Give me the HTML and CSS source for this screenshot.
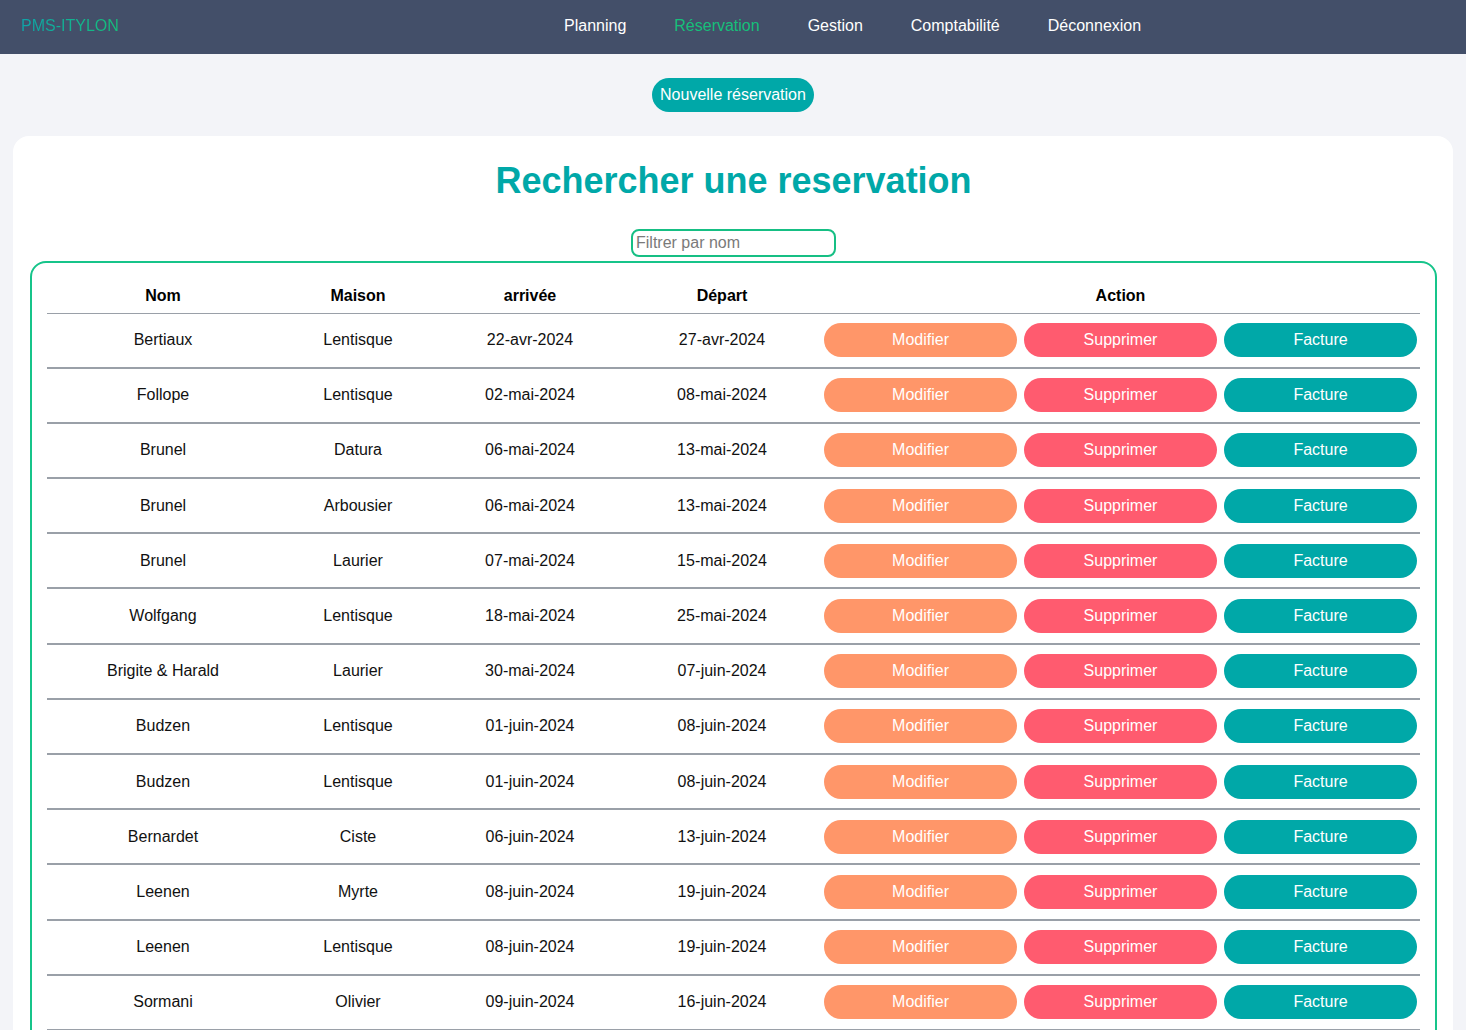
FILE: index.html
```html
<!DOCTYPE html>
<html lang="fr">
<head>
<meta charset="utf-8">
<title>PMS-ITYLON</title>
<link rel="stylesheet" href="styles.css">
</head>
<body>
<nav class="topbar">
  <div class="logo">PMS-ITYLON</div>
  <ul class="menu">
    <li><a href="#">Planning</a></li>
    <li><a href="#" class="active">Réservation</a></li>
    <li><a href="#">Gestion</a></li>
    <li><a href="#">Comptabilité</a></li>
    <li><a href="#">Déconnexion</a></li>
  </ul>
</nav>
<main class="page">
  <div class="new-wrap"><button class="btn-new">Nouvelle réservation</button></div>
  <section class="card">
    <h1 class="title">Rechercher une reservation</h1>
    <div class="filter-wrap"><input class="filter" type="text" placeholder="Filtrer par nom"></div>
    <div class="table-box">
      <table class="resa">
        <colgroup>
          <col class="c-nom"><col class="c-maison"><col class="c-arr"><col class="c-dep"><col class="c-act">
        </colgroup>
        <thead>
          <tr><th>Nom</th><th>Maison</th><th>arrivée</th><th>Départ</th><th>Action</th></tr>
        </thead>
        <tbody>
          <tr><td>Bertiaux</td><td>Lentisque</td><td>22-avr-2024</td><td>27-avr-2024</td><td><div class="actions"><button class="b mod">Modifier</button><button class="b sup">Supprimer</button><button class="b fac">Facture</button></div></td></tr>
          <tr><td>Follope</td><td>Lentisque</td><td>02-mai-2024</td><td>08-mai-2024</td><td><div class="actions"><button class="b mod">Modifier</button><button class="b sup">Supprimer</button><button class="b fac">Facture</button></div></td></tr>
          <tr><td>Brunel</td><td>Datura</td><td>06-mai-2024</td><td>13-mai-2024</td><td><div class="actions"><button class="b mod">Modifier</button><button class="b sup">Supprimer</button><button class="b fac">Facture</button></div></td></tr>
          <tr><td>Brunel</td><td>Arbousier</td><td>06-mai-2024</td><td>13-mai-2024</td><td><div class="actions"><button class="b mod">Modifier</button><button class="b sup">Supprimer</button><button class="b fac">Facture</button></div></td></tr>
          <tr><td>Brunel</td><td>Laurier</td><td>07-mai-2024</td><td>15-mai-2024</td><td><div class="actions"><button class="b mod">Modifier</button><button class="b sup">Supprimer</button><button class="b fac">Facture</button></div></td></tr>
          <tr><td>Wolfgang</td><td>Lentisque</td><td>18-mai-2024</td><td>25-mai-2024</td><td><div class="actions"><button class="b mod">Modifier</button><button class="b sup">Supprimer</button><button class="b fac">Facture</button></div></td></tr>
          <tr><td>Brigite &amp; Harald</td><td>Laurier</td><td>30-mai-2024</td><td>07-juin-2024</td><td><div class="actions"><button class="b mod">Modifier</button><button class="b sup">Supprimer</button><button class="b fac">Facture</button></div></td></tr>
          <tr><td>Budzen</td><td>Lentisque</td><td>01-juin-2024</td><td>08-juin-2024</td><td><div class="actions"><button class="b mod">Modifier</button><button class="b sup">Supprimer</button><button class="b fac">Facture</button></div></td></tr>
          <tr><td>Budzen</td><td>Lentisque</td><td>01-juin-2024</td><td>08-juin-2024</td><td><div class="actions"><button class="b mod">Modifier</button><button class="b sup">Supprimer</button><button class="b fac">Facture</button></div></td></tr>
          <tr><td>Bernardet</td><td>Ciste</td><td>06-juin-2024</td><td>13-juin-2024</td><td><div class="actions"><button class="b mod">Modifier</button><button class="b sup">Supprimer</button><button class="b fac">Facture</button></div></td></tr>
          <tr><td>Leenen</td><td>Myrte</td><td>08-juin-2024</td><td>19-juin-2024</td><td><div class="actions"><button class="b mod">Modifier</button><button class="b sup">Supprimer</button><button class="b fac">Facture</button></div></td></tr>
          <tr><td>Leenen</td><td>Lentisque</td><td>08-juin-2024</td><td>19-juin-2024</td><td><div class="actions"><button class="b mod">Modifier</button><button class="b sup">Supprimer</button><button class="b fac">Facture</button></div></td></tr>
          <tr><td>Sormani</td><td>Olivier</td><td>09-juin-2024</td><td>16-juin-2024</td><td><div class="actions"><button class="b mod">Modifier</button><button class="b sup">Supprimer</button><button class="b fac">Facture</button></div></td></tr>
        </tbody>
      </table>
    </div>
  </section>
</main>
</body>
</html>
```

FILE: styles.css
```css
* { box-sizing: border-box; }

html, body {
  margin: 0;
  padding: 0;
}

body {
  background: #f3f4f8;
  font-family: "Liberation Sans", Arial, sans-serif;
  font-size: 16px;
  color: #111;
}

.topbar {
  height: 54px;
  background: #434f69;
  display: flex;
  align-items: center;
  padding-left: 21px;
  padding-bottom: 2px;
}

.logo {
  font-size: 16px;
  background: linear-gradient(90deg, #0fa3a8 0%, #16bf7a 100%);
  -webkit-background-clip: text;
  background-clip: text;
  color: transparent;
  width: 98px;
}

.menu {
  list-style: none;
  margin: 0 0 0 445px;
  padding: 0;
  display: flex;
  gap: 48px;
}

.menu a {
  color: #ffffff;
  text-decoration: none;
  font-size: 16px;
}

.menu a.active {
  color: #16bf7a;
}

.page {
  padding: 24px 13px 0;
}

.new-wrap {
  display: flex;
  justify-content: center;
}

.btn-new {
  height: 34px;
  padding: 0 8px;
  border: none;
  border-radius: 17px;
  background: #00a8a8;
  color: #fff;
  font-family: "Liberation Sans", Arial, sans-serif;
  font-size: 16px;
}

.card {
  margin-top: 24px;
  background: #fff;
  border-radius: 16px;
  padding: 23px 16px 24px 17px;
}

.title {
  margin: 0;
  text-align: center;
  font-size: 36px;
  line-height: 44px;
  font-weight: bold;
  color: #00a8a8;
}

.filter-wrap {
  display: flex;
  justify-content: center;
  margin-top: 26px;
}

.filter {
  width: 205px;
  height: 28px;
  border: 2px solid #16bf84;
  border-radius: 8px;
  padding: 0 3px;
  font-family: "Liberation Sans", Arial, sans-serif;
  font-size: 16px;
  color: #111;
  outline: none;
}

.filter::placeholder {
  color: #7a7a7a;
}

.table-box {
  margin-top: 4px;
  border: 2px solid #16c48a;
  border-radius: 16px;
  padding: 14px 15px 24px 15px;
}

.resa {
  width: 100%;
  border-collapse: collapse;
  table-layout: fixed;
}

.c-nom { width: 232px; }
.c-maison { width: 158px; }
.c-arr { width: 186px; }
.c-dep { width: 198px; }
.c-act { width: 599px; }

.resa th {
  font-weight: bold;
  font-size: 16px;
  height: 36px;
  padding: 2px 0 0;
  text-align: center;
  border-bottom: 1px solid #9aa0a8;
  color: #000;
}

.resa td {
  text-align: center;
  padding: 9.6px 3px;
  border-bottom: 2px solid #9aa0a8;
  color: #111;
}

.actions {
  display: flex;
  gap: 7px;
}

.b {
  flex: 1;
  height: 34px;
  border: none;
  border-radius: 17px;
  color: #fff;
  font-family: "Liberation Sans", Arial, sans-serif;
  font-size: 16px;
}

.mod { background: #ff9669; }
.sup { background: #ff5b6f; }
.fac { background: #00a8a8; }
```
